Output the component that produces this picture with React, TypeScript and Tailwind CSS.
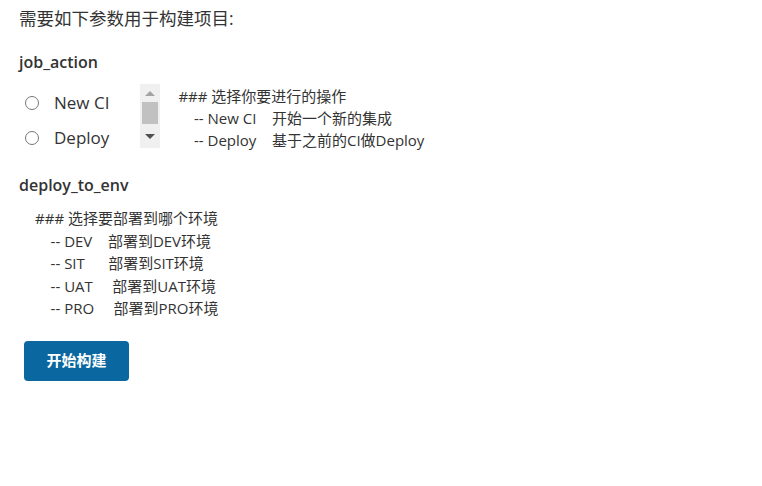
import React from 'react';

const font = { fontFamily: '"Open Sans", "Noto Sans CJK SC", sans-serif' };

const Radio: React.FC<{ label: string }> = ({ label }) => (
    <label className="flex items-center h-[35px]">
        <span className="w-[14px] h-[14px] rounded-full border border-[#767676] bg-white ml-[6px] mr-[15px]" />
        <span className="text-[17px] text-[#333]">{label}</span>
    </label>
);

const Scroll: React.FC = () => (
    <div className="w-[20px] h-[64px] bg-[#f0f0f0] flex flex-col items-center ml-[31px]">
        <div className="h-[18px] flex items-center justify-center">
            <span className="w-0 h-0 border-l-[5px] border-r-[5px] border-b-[5px] border-l-transparent border-r-transparent border-b-[#a3a3a3]" />
        </div>
        <div className="w-[16px] h-[22px] bg-[#c1c1c1]" />
        <div className="flex-1 flex items-center justify-center">
            <span className="w-0 h-0 border-l-[5px] border-r-[5px] border-t-[5px] border-l-transparent border-r-transparent border-t-[#505050]" />
        </div>
    </div>
);

const App: React.FC = () => {
    const jobDesc = `### 选择你要进行的操作
    -- New CI    开始一个新的集成
    -- Deploy    基于之前的CI做Deploy`;
    const envDesc = `### 选择要部署到哪个环境
    -- DEV    部署到DEV环境
    -- SIT      部署到SIT环境
    -- UAT     部署到UAT环境
    -- PRO     部署到PRO环境`;

    return (
        <div className="w-[762px] h-[486px] bg-white text-[#333] pl-[19px]" style={font}>
            <div className="pt-[6px] text-[17.5px] leading-[24px]">需要如下参数用于构建项目:</div>

            <div className="mt-[20px] text-[16px] font-semibold leading-[24px]">job_action</div>
            <div className="flex mt-[10px]">
                <div className="flex flex-col mt-[1px]">
                    <Radio label="New CI" />
                    <Radio label="Deploy" />
                </div>
                <Scroll />
                <pre className="ml-[18px] mt-[1px] text-[15px] leading-[22px] whitespace-pre" style={font}>{jobDesc}</pre>
            </div>

            <div className="mt-[18px] text-[16px] font-semibold leading-[24px]">deploy_to_env</div>
            <pre className="ml-[16px] mt-[10px] text-[15px] leading-[22.5px] whitespace-pre" style={font}>{envDesc}</pre>

            <button className="mt-[21px] ml-[5px] w-[105px] h-[40px] rounded-[4px] bg-[#0b67a0] text-white text-[15px] font-bold" style={font}>
                开始构建
            </button>
        </div>
    );
};

export default App;
